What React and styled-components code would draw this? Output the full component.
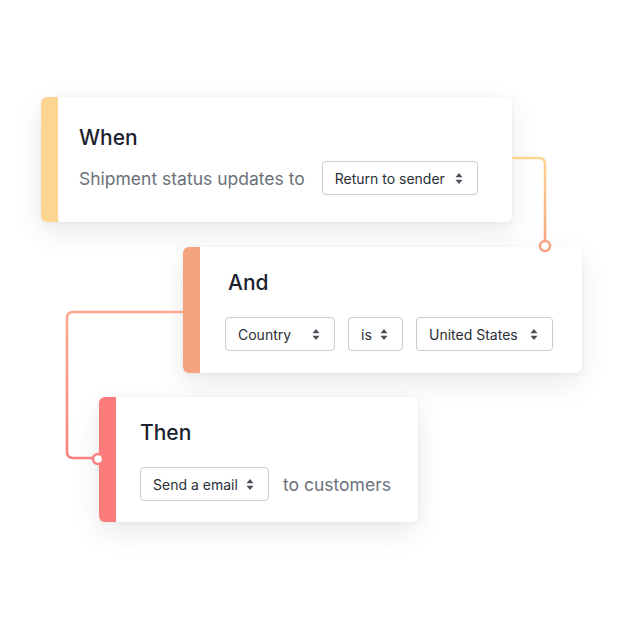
import styled, { createGlobalStyle } from "styled-components";

const GlobalStyle = createGlobalStyle`
  * { box-sizing: border-box; }
  body {
    margin: 0;
    background: #fff;
    font-family: Inter, "Noto Sans", sans-serif;
  }
`;

export default function App() {
  return (
    <>
      <GlobalStyle />
      <Canvas>
        <Card $x={41} $y={97} $w={471} $h={125} $accent="#fdd591" $pad="27px 0 0 21px" $gap={9}>
          <Stripe />
          <Body>
            <Title>When</Title>
            <Row>
              <Hint>Shipment status updates to</Hint>
              <Select label="Return to sender" width={156} />
            </Row>
          </Body>
        </Card>

        <Card $x={183} $y={247} $w={399} $h={126} $accent="#f3a37e" $pad="22px 0 0 25px" $gap={20}>
          <Stripe />
          <Body>
            <Title style={{ marginLeft: 3 }}>And</Title>
            <Row $gap={13}>
              <Select label="Country" width={110} />
              <Select label="is" width={55} />
              <Select label="United States" width={137} />
            </Row>
          </Body>
        </Card>

        <Card $x={99} $y={397} $w={319} $h={125} $accent="#fc7c7c" $pad="22px 0 0 24px" $gap={20}>
          <Stripe />
          <Body>
            <Title>Then</Title>
            <Row $gap={14}>
              <Select label="Send a email" width={129} />
              <Hint>to customers</Hint>
            </Row>
          </Body>
        </Card>

        <Wires width="620" height="620" viewBox="0 0 620 620">
          <defs>
            <linearGradient id="wireA" gradientUnits="userSpaceOnUse" x1="0" y1="158" x2="0" y2="250">
              <stop offset="0" stopColor="#fcd690" />
              <stop offset="1" stopColor="#f6a07c" />
            </linearGradient>
            <linearGradient id="wireB" gradientUnits="userSpaceOnUse" x1="0" y1="312" x2="0" y2="462">
              <stop offset="0" stopColor="#fca88a" />
              <stop offset="1" stopColor="#fb7e7d" />
            </linearGradient>
          </defs>
          <path d="M512 158 H539 Q545 158 545 164 V240" fill="none" stroke="url(#wireA)" strokeWidth="2.5" />
          <circle cx="545" cy="246" r="5" fill="#fff" stroke="url(#wireA)" strokeWidth="2.5" />
          <path d="M183 312 H73 Q67 312 67 318 V452 Q67 458 73 458 H93" fill="none" stroke="url(#wireB)" strokeWidth="2.5" />
          <circle cx="98" cy="459" r="5" fill="#fff" stroke="url(#wireB)" strokeWidth="2.5" />
        </Wires>
      </Canvas>
    </>
  );
}

function Select({ label, width }) {
  return (
    <SelectBox style={{ width }}>
      <span>{label}</span>
      <Updown width="8" height="13" viewBox="0 0 8 13">
        <path d="M4 1 L7.5 5.2 H0.5 Z" />
        <path d="M4 12 L7.5 7.8 H0.5 Z" />
      </Updown>
    </SelectBox>
  );
}

const Canvas = styled.div`
  position: relative;
  width: 620px;
  height: 620px;
  background: #fff;
  overflow: hidden;
`;

// workflow nodes sit at fixed spots on the canvas
const Card = styled.div`
  position: absolute;
  left: ${(p) => p.$x}px;
  top: ${(p) => p.$y}px;
  width: ${(p) => p.$w}px;
  height: ${(p) => p.$h}px;
  display: flex;
  background: #fff;
  border-radius: 6px;
  overflow: hidden;
  box-shadow: 0 10px 28px rgba(20, 24, 40, 0.09), 0 1px 4px rgba(20, 24, 40, 0.05);
  --accent: ${(p) => p.$accent};
  --pad: ${(p) => p.$pad};
  --gap: ${(p) => p.$gap}px;
`;

const Stripe = styled.div`
  width: 17px;
  flex: none;
  background: var(--accent);
`;

const Body = styled.div`
  flex: 1;
  display: flex;
  flex-direction: column;
  gap: var(--gap);
  padding: var(--pad);
`;

const Title = styled.h3`
  margin: 0;
  font-size: 21px;
  line-height: 28px;
  font-weight: 500;
  color: #1c2230;
`;

const Row = styled.div`
  display: flex;
  align-items: center;
  gap: ${(p) => p.$gap ?? 17}px;
`;

const Hint = styled.span`
  font-size: 17.5px;
  color: #6b717b;
  white-space: nowrap;
`;

const SelectBox = styled.div`
  height: 34px;
  display: flex;
  align-items: center;
  justify-content: space-between;
  padding: 0 14px 0 12px;
  border: 1px solid #c8cbd0;
  border-radius: 4px;
  background: #fff;
  font-size: 14px;
  color: #2a2f37;
  white-space: nowrap;
`;

const Updown = styled.svg`
  flex: none;
  fill: #4a4f57;
`;

const Wires = styled.svg`
  position: absolute;
  inset: 0;
  pointer-events: none;
`;
